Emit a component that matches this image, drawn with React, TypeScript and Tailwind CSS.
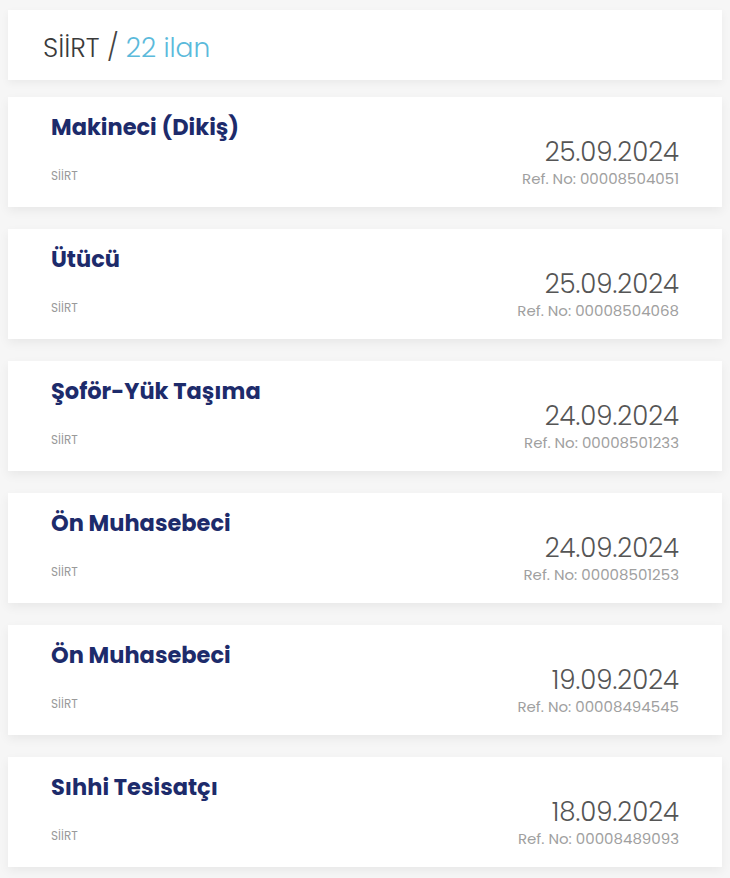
const ilanlar = [
  { title: "Makineci (Dikiş)", date: "25.09.2024", ref: "00008504051" },
  { title: "Ütücü", date: "25.09.2024", ref: "00008504068" },
  { title: "Şoför-Yük Taşıma", date: "24.09.2024", ref: "00008501233" },
  { title: "Ön Muhasebeci", date: "24.09.2024", ref: "00008501253" },
  { title: "Ön Muhasebeci", date: "19.09.2024", ref: "00008494545" },
  { title: "Sıhhi Tesisatçı", date: "18.09.2024", ref: "00008489093" },
];

const App = () => {
  return (
    <div className="min-h-[878px] bg-[#f6f6f6] px-2 pt-[10px] pb-4 font-['Poppins','Lato',sans-serif]">
      <div className="flex h-[70px] items-center bg-white px-[35px] pt-[6px] shadow-[0_3px_8px_rgba(0,0,0,0.05)]">
        <h1 className="text-[26.5px] font-light leading-none text-[#3a3a3a]">
          SİİRT <span className="text-[#444]">/</span> <span className="text-[#5bbadb]">22 ilan</span>
        </h1>
      </div>

      <div className="mt-[17px] flex flex-col gap-[22px]">
        {ilanlar.map((ilan, i) => (
          <div
            key={i}
            className="flex h-[110px] justify-between bg-white px-[43px] shadow-[0_4px_10px_rgba(0,0,0,0.06)]"
          >
            <div className="pt-[15px]">
              <h2 className="text-[22.5px] font-bold leading-[30px] text-[#1d2b6b]">{ilan.title}</h2>
              <p className="mt-[26px] text-[12px] leading-4 text-[#9a9a9a]">SİİRT</p>
            </div>
            <div className="flex flex-col items-end pt-[39px]">
              <p className="text-[26px] font-light leading-8 text-[#555]">{ilan.date}</p>
              <p className="mt-[1px] text-[15px] leading-5 text-[#a0a0a0]">Ref. No: {ilan.ref}</p>
            </div>
          </div>
        ))}
      </div>
    </div>
  );
};

export default App;
